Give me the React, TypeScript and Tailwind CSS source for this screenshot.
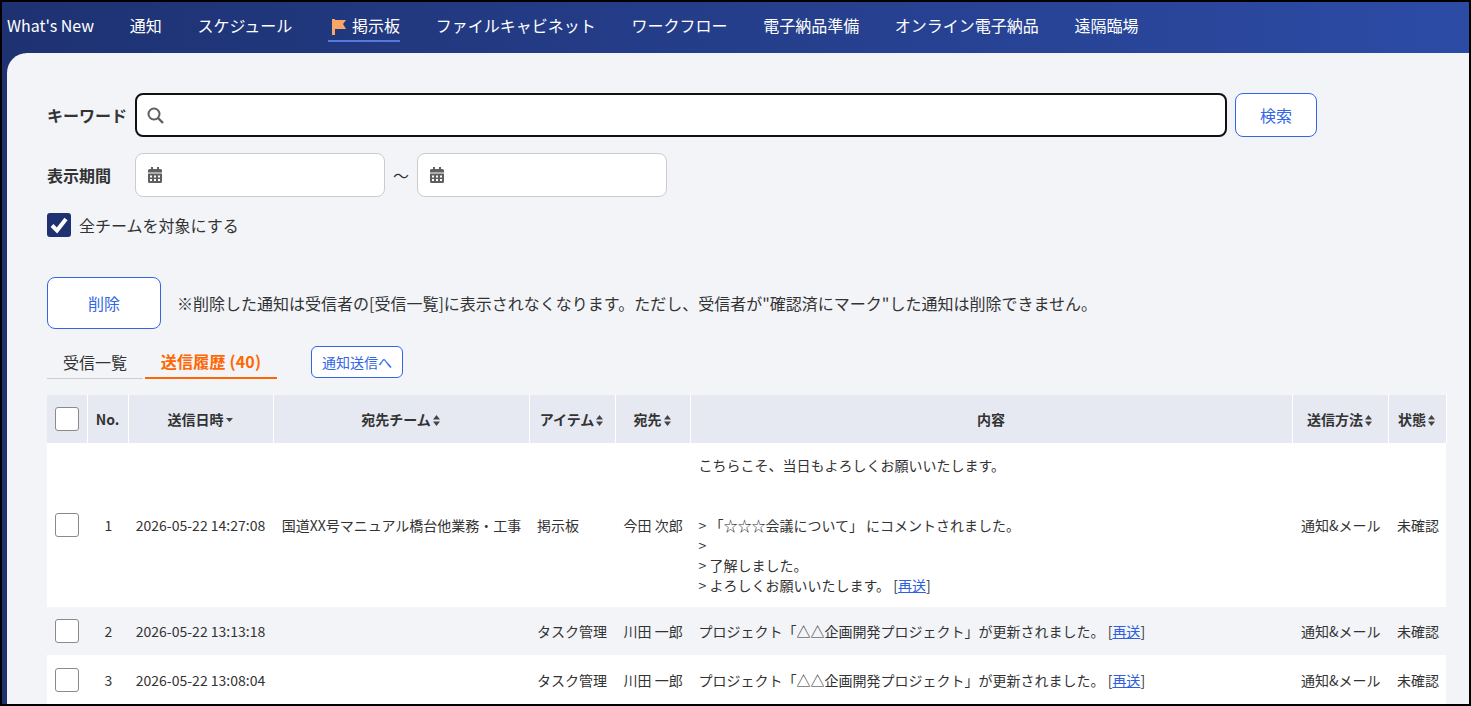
const navItems = ["What's New", "通知", "スケジュール", "掲示板", "ファイルキャビネット", "ワークフロー", "電子納品準備", "オンライン電子納品", "遠隔臨場"];

function SortIcon({ down }: { down?: boolean }) {
  return (
    <svg width="7" height="11" viewBox="0 0 7 11" className="inline-block ml-[2px] align-[-1px]" fill="#444444">
      {down ? (
        <path d="M0 3 L7 3 L3.5 7 Z" />
      ) : (
        <>
          <path d="M3.5 0 L7 4.5 L0 4.5 Z" />
          <path d="M0 6.5 L7 6.5 L3.5 11 Z" />
        </>
      )}
    </svg>
  );
}

function DateField() {
  return (
    <div className="w-[250px] h-11 bg-white border border-[#cccccc] rounded-lg flex items-center pl-3">
      <svg width="14" height="16" viewBox="0 0 14 16" fill="#5f5f5f">
        <path d="M3 0h2v2h4V0h2v2h1.5A1.5 1.5 0 0 1 14 3.5V5.500H0V3.500A1.500 1.500 0 0 1 1.500 2H3z" />
        <path fillRule="evenodd" d="M0 6.500h14v8A1.500 1.500 0 0 1 12.500 16h-11A1.500 1.500 0 0 1 0 14.500zM2 8.500v2h2v-2zm4 0v2h2v-2zm4 0v2h2v-2zM2 12v2h2v-2zm4 0v2h2v-2zm4 0v2h2v-2z" />
      </svg>
    </div>
  );
}

function Check() {
  return <div className="w-6 h-6 mx-auto bg-white border border-[#8a8a8a] rounded-[3px]" />;
}

function Resend() {
  return (
    <span>
      [<span className="text-[#2f5fe0] underline">再送</span>]
    </span>
  );
}

const rows = [
  { no: 2, date: "2026-05-22 13:13:18", rowClass: "bg-[#f2f4f8] h-12" },
  { no: 3, date: "2026-05-22 13:08:04", rowClass: "bg-white h-[50px]" },
];

export default function App() {
  return (
    <div
      className="h-[706px] overflow-hidden border-2 border-black bg-gradient-to-r from-[#1e3272] to-[#2c4ba5] text-[#333333]"
      style={{ fontFamily: '"Noto Sans CJK JP", "Noto Sans", sans-serif' }}
    >
      <nav className="h-[51px] pl-[5px] flex items-start gap-[35.7px] text-white text-base">
        {navItems.map((item) =>
          item === "掲示板" ? (
            <div key={item} className="mt-[10px] h-[30px] pl-[4px] flex items-start gap-[6px] border-b-2 border-[#5578dc]">
              <svg width="14" height="16" viewBox="0 0 14 16" className="mt-[7px]" fill="#f9a566">
                <path d="M0 0h3v16H0zM3 1h11l-3 4 3 5H3z" />
              </svg>
              <span className="leading-[26px]">{item}</span>
            </div>
          ) : (
            <span key={item} className="mt-[10px] leading-[26px]">{item}</span>
          )
        )}
      </nav>

      <main className="ml-[5px] h-[651px] bg-[#f2f4f8] rounded-tl-[20px] pl-10 pt-10">
        <div className="flex items-center h-11">
          <label className="w-[88px] font-bold text-base">キーワード</label>
          <div className="w-[1092px] h-11 bg-white border-2 border-[#111111] rounded-lg flex items-center pl-[10px]">
            <svg width="17" height="17" viewBox="0 0 17 17" fill="none" stroke="#5f5f5f" strokeWidth="2">
              <circle cx="7" cy="7" r="5.500" />
              <path d="M11 11 L16 16" strokeWidth="2.400" />
            </svg>
          </div>
          <button className="ml-2 w-[82px] h-11 bg-white border border-[#3366e6] rounded-lg text-[#3366e6] text-base">検索</button>
        </div>

        <div className="flex items-center h-11 mt-4">
          <label className="w-[88px] font-bold text-base">表示期間</label>
          <DateField />
          <span className="w-8 text-center text-base">〜</span>
          <DateField />
        </div>

        <div className="flex items-center h-6 mt-4 gap-2">
          <div className="w-6 h-6 bg-[#1e3272] rounded-[3px] flex items-center justify-center">
            <svg width="18" height="18" viewBox="0 0 18 18" fill="none" stroke="white" strokeWidth="4">
              <path d="M2 9.500 L7 14.500 L16 3" />
            </svg>
          </div>
          <span className="text-base">全チームを対象にする</span>
        </div>

        <div className="flex items-center mt-10 gap-4">
          <button className="w-[114px] h-[52px] bg-white border border-[#3366e6] rounded-lg text-[#3366e6] text-base">削除</button>
          <p className="text-base">※削除した通知は受信者の[受信一覧]に表示されなくなります。ただし、受信者が"確認済にマーク"した通知は削除できません。</p>
        </div>

        <div className="flex items-end mt-[17px] h-[33px]">
          <div className="w-24 h-[26px] border-b border-[#cccccc] text-center text-base leading-[19px]">受信一覧</div>
          <div className="ml-[2px] w-[132px] h-[27px] border-b-2 border-[#ff6600] text-center text-base font-bold text-[#ff6600] leading-[19px] tracking-[0.2px]">送信履歴 (40)</div>
          <button className="ml-[34px] mb-[1px] w-[92px] h-8 bg-white border border-[#3366e6] rounded-md text-[#3366e6] text-sm">通知送信へ</button>
        </div>

        <table className="mt-4 w-[1399px] table-fixed border-collapse text-sm leading-5">
          <colgroup>
            <col className="w-[40px]" />
            <col className="w-[41px]" />
            <col className="w-[145px]" />
            <col className="w-[256px]" />
            <col className="w-[86px]" />
            <col className="w-[75px]" />
            <col className="w-[602px]" />
            <col className="w-[96px]" />
            <col className="w-[58px]" />
          </colgroup>
          <thead>
            <tr className="bg-[#e6e9f2] h-12 font-bold">
              <th className="border-r border-white"><Check /></th>
              <th className="border-r border-white">No.</th>
              <th className="border-r border-white pr-[1px]">送信日時<SortIcon down /></th>
              <th className="border-r border-white pr-[1px]">宛先チーム<SortIcon /></th>
              <th className="border-r border-white pr-[1px]">アイテム<SortIcon /></th>
              <th className="border-r border-white pr-[1px]">宛先<SortIcon /></th>
              <th className="border-r border-white">内容</th>
              <th className="border-r border-white pr-[1px]">送信方法<SortIcon /></th>
              <th className="border-r border-white pr-[1px]">状態<SortIcon /></th>
            </tr>
          </thead>
          <tbody>
            <tr className="bg-white h-[164px]">
              <td><Check /></td>
              <td className="text-center pl-[2px]">1</td>
              <td className="text-center whitespace-nowrap">2026-05-22 14:27:08</td>
              <td className="text-center whitespace-nowrap pl-[1px]">国道XX号マニュアル橋台他業務・工事</td>
              <td className="px-2">掲示板</td>
              <td className="pl-[8.5px] whitespace-nowrap">今田 次郎</td>
              <td className="pl-[8.5px] pr-2 py-3">
                <div>こちらこそ、当日もよろしくお願いいたします。</div>
                <div className="h-10" />
                <div>&gt; 「☆☆☆会議について」 にコメントされました。</div>
                <div>&gt;</div>
                <div>&gt; 了解しました。</div>
                <div>&gt; よろしくお願いいたします。 <Resend /></div>
              </td>
              <td className="pl-[9px] whitespace-nowrap">通知&amp;メール</td>
              <td className="pl-[9px] whitespace-nowrap">未確認</td>
            </tr>
            {rows.map((r) => (
              <tr key={r.no} className={r.rowClass}>
                <td><Check /></td>
                <td className="text-center pl-[2px]">{r.no}</td>
                <td className="text-center whitespace-nowrap">{r.date}</td>
                <td />
                <td className="px-2">タスク管理</td>
                <td className="pl-[8.5px] whitespace-nowrap">川田 一郎</td>
                <td className="pl-[8.5px] pr-2">プロジェクト「△△企画開発プロジェクト」が更新されました。 <Resend /></td>
                <td className="pl-[9px] whitespace-nowrap">通知&amp;メール</td>
                <td className="pl-[9px] whitespace-nowrap">未確認</td>
              </tr>
            ))}
          </tbody>
        </table>
      </main>
    </div>
  );
}
